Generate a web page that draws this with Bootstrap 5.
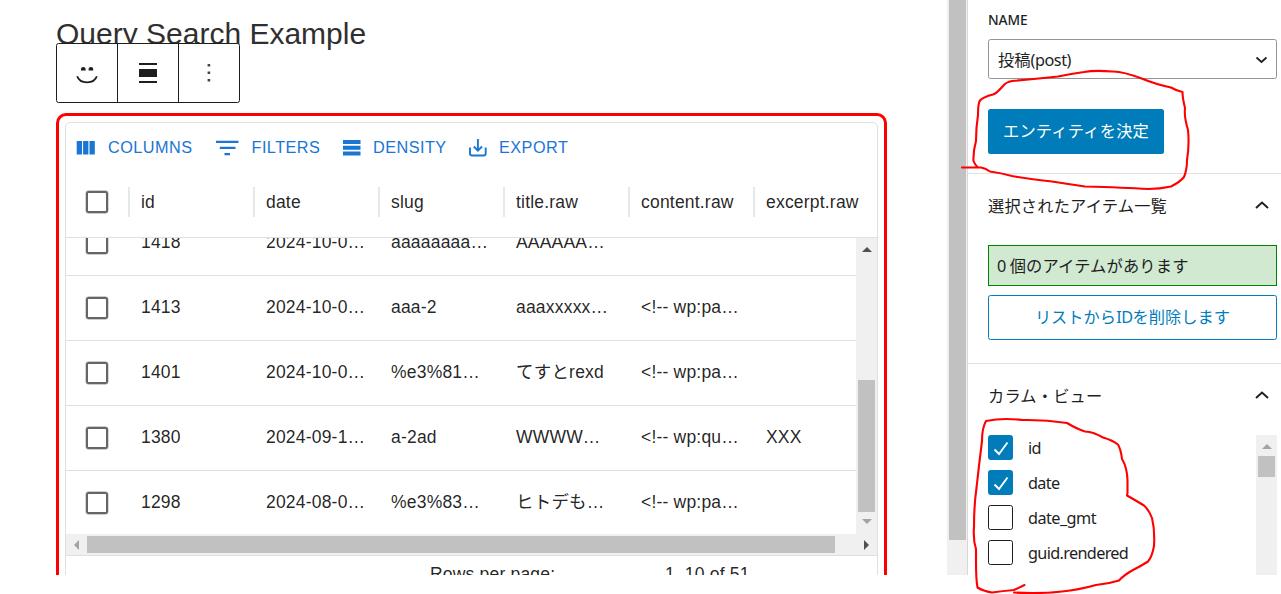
<!DOCTYPE html>
<html lang="ja">
<head>
<meta charset="utf-8">
<meta name="viewport" content="width=device-width, initial-scale=1">
<title>Query Search Example</title>
<link href="https://cdn.jsdelivr.net/npm/bootstrap@5.3.0/dist/css/bootstrap.min.css" rel="stylesheet">
<style>
  body { background: #fff; overflow: hidden; color: #1e1e1e; height: 594px; }
  .editor { height: 575px; }
  .canvas-pane { width: 947px; padding: 15px 0 0 56px; font-family: "Liberation Sans", "Noto Sans CJK JP", sans-serif; }
  .post-title { font-size: 30px; line-height: 38px; height: 28px; margin: 0; font-weight: 400; color: #2f2f2f; white-space: nowrap; }
  .block-toolbar { width: 184px; height: 60px; border: 1px solid #1e1e1e; border-radius: 2.5px; background: #fff; }
  .block-toolbar > span { border-right: 1px solid #1e1e1e; width: 61px; flex: none; }
  .block-toolbar > span:last-child { border-right: 0; width: 60px; }
  .query-block { width: 831px; height: 490px; margin-top: 10px; border: 3px solid red; border-radius: 10px; padding: 6px; }
  .data-grid { width: 813px; height: 480px; border: 1px solid #e0e0e0; border-radius: 5px; font-size: 17.5px; letter-spacing: .2px; color: rgba(0,0,0,.87); }
  .grid-tools { height: 49px; padding-left: 10px; color: #1976d2; font-size: 16.25px; letter-spacing: .46px; }
  .grid-tools svg { flex: none; }
  .tool-name { padding-left: 12px; flex: none; }
  .tool-columns { width: 119px; }
  .tool-filters { width: 104px; padding-left: 12.5px; }
  .tool-density { width: 108px; }
  .grid-head { height: 66px; border-bottom: 1px solid #e0e0e0; padding-bottom: 5px; }
  .pick-cell { width: 62px; padding-left: 20px; flex: none; }
  .pick-box { display: block; width: 22px; height: 22px; border: 2px solid #666; border-radius: 2.5px; box-shadow: 0 0 0 .4px #999; }
  .head-cell { width: 125px; height: 30px; line-height: 30px; border-left: 2px solid #e8e8e8; padding-left: 11px; flex: none; white-space: nowrap; }
  .head-cell:last-child { width: 122px; }
  .grid-rows { height: 296px; }
  .row-list { width: 790px; height: 296px; }
  .grid-row { height: 65px; border-bottom: 1px solid #e0e0e0; flex: none; }
  .grid-row:last-child { margin-bottom: -2px; }
  .data-cell { width: 125px; padding-left: 13px; flex: none; white-space: nowrap; line-height: 26px; padding-bottom: 2px; }
  .v-track { width: 21px; background: #f0f0f0; flex: none; }
  .h-track { height: 21px; background: #f0f0f0; padding-right: 8px; }
  .h-thumb { width: 748px; height: 17px; background: #c1c1c1; }
  .v-thumb { width: 17px; background: #c1c1c1; }
  .grid-foot { border-top: 1px solid #e0e0e0; height: 30px; padding-top: 5px; line-height: 26px; white-space: nowrap; letter-spacing: .187px; }
  .page-track { width: 21px; background: #f0f0f0; border-right: 1px solid #d8d8d8; padding-left: 2px; flex: none; }
  .side { width: 313px; flex: none; font-family: "Noto Sans", "Noto Sans CJK JP", sans-serif; font-size: 16.25px; line-height: 24px; letter-spacing: .17px; }
  .side-inner { width: 289px; margin-left: 20px; }
  .field-name { font-size: 13.75px; font-weight: 500; line-height: 20px; padding-top: 10px; height: 39px; letter-spacing: -.1px; }
  .type-select { height: 40px; border: 1px solid #949494; border-radius: 2.5px; padding: 0 8px 0 9px; }
  .type-select > span { padding-top: 1px; letter-spacing: 0; }
  .latin { letter-spacing: -.45px; }
  .wp-btn { border-radius: 2.5px; height: 45px; font-size: 16.25px; line-height: 24px; padding: 0 0 2px; letter-spacing: .2px; }
  .wp-btn.btn-decide { width: 176px; margin-top: 30px; background: #007cba; color: #fff; border: 0; }
  .wp-btn.btn-remove { color: #007cba; border: 1px solid #007cba; background: #fff; margin-top: 9px; letter-spacing: 0; }
  .side-panel { border-top: 1px solid #e0e0e0; }
  .panel-title { height: 64px; padding-right: 6px; }
  .panel-title svg { margin-bottom: 2px; }
  .count-note { height: 41px; border: 1px solid green; background: #d0e9d0; padding-left: 8px; margin-top: 7px; }
  .view-names { letter-spacing: -.67px; }
  .view-names .view-row > span:last-child { padding-top: 1px; }
  .view-box { width: 25px; height: 25px; border: 1px solid #1e1e1e; border-radius: 2.5px; flex: none; }
  .view-box.on { background: #007cba; border-color: #007cba; }
  .view-row { height: 35px; gap: 15px; }
  .pen-marks { left: 0; top: 0; pointer-events: none; }
</style>
</head>
<body>
<div class="editor d-flex overflow-hidden">
  <main class="canvas-pane flex-shrink-0 overflow-hidden">
    <h1 class="post-title">Query Search Example</h1>
    <div class="block-toolbar d-flex position-relative">
      <span class="d-flex align-items-center justify-content-center">
        <svg width="24" height="22" viewBox="0 0 24 22" style="margin-top:4px"><path d="M2.200 12.300c2.600 8.100 17 8.100 19.600 0" fill="none" stroke="#1e1e1e" stroke-width="1.8"/><path d="M6 6.500V5a2.300 2 0 0 1 4.600 0v1.500zM13.600 6.500V5a2.300 2 0 0 1 4.600 0v1.500z" fill="#1e1e1e"/></svg>
      </span>
      <span class="d-flex align-items-center justify-content-center">
        <svg width="18" height="20" viewBox="0 0 18 20"><path d="M0 0h18v2H0zM0 6h18v8H0zM0 18h18v2H0z" fill="#1e1e1e"/></svg>
      </span>
      <span class="d-flex align-items-center justify-content-center">
        <svg width="4" height="18" viewBox="0 0 4 18"><path d="M.600 0h2.600v2.600H.600zM.600 7.500h2.600v2.600H.600zM.600 15h2.600v2.600H.600z" fill="#444"/></svg>
      </span>
    </div>

    <section class="query-block">
      <div class="data-grid overflow-hidden">
        <div class="grid-tools d-flex align-items-center">
          <svg width="20" height="14" viewBox="0 0 20 14"><path d="M.700 0h5.300v13.500H.700zM7.100 0h5.300v13.500H7.100zM13.500 0h5.300v13.500h-5.300z" fill="#1976d2"/></svg>
          <span class="tool-name tool-columns">COLUMNS</span>
          <svg width="24" height="16" viewBox="0 0 24 16"><path d="M1 .800h22.500v2.300H1zM4.800 6.800h15.700v2.300H4.800zM9.500 13h5.500v2.300H9.500z" fill="#1976d2"/></svg>
          <span class="tool-name tool-filters">FILTERS</span>
          <svg width="18" height="16" viewBox="0 0 18 16"><path d="M0 0h17.500v4H0zM0 5.800h17.500v4H0zM0 11.500h17.500v4H0z" fill="#1976d2"/></svg>
          <span class="tool-name tool-density">DENSITY</span>
          <svg width="18" height="18" viewBox="0 0 18 18"><path d="M1 8.500V14.500a2 2 0 0 0 2 2H14.700a2 2 0 0 0 2-2V8.500M8.900 0V11.500M4.800 7.500l4.100 4.100L13 7.500" fill="none" stroke="#1976d2" stroke-width="1.900"/></svg>
          <span class="tool-name">EXPORT</span>
        </div>
        <div class="grid-head d-flex align-items-center">
          <div class="pick-cell"><i class="pick-box"></i></div>
          <div class="head-cell">id</div>
          <div class="head-cell">date</div>
          <div class="head-cell">slug</div>
          <div class="head-cell">title.raw</div>
          <div class="head-cell">content.raw</div>
          <div class="head-cell">excerpt.raw</div>
        </div>
        <div class="grid-rows d-flex">
          <div class="row-list d-flex flex-column justify-content-end overflow-hidden flex-shrink-0">
            <div class="grid-row d-flex align-items-center"><div class="pick-cell"><i class="pick-box"></i></div><div class="data-cell">1418</div><div class="data-cell">2024-10-0…</div><div class="data-cell">aaaaaaaa…</div><div class="data-cell">AAAAAA…</div></div>
            <div class="grid-row d-flex align-items-center"><div class="pick-cell"><i class="pick-box"></i></div><div class="data-cell">1413</div><div class="data-cell">2024-10-0…</div><div class="data-cell">aaa-2</div><div class="data-cell">aaaxxxxx…</div><div class="data-cell">&lt;!-- wp:pa…</div></div>
            <div class="grid-row d-flex align-items-center"><div class="pick-cell"><i class="pick-box"></i></div><div class="data-cell">1401</div><div class="data-cell">2024-10-0…</div><div class="data-cell">%e3%81…</div><div class="data-cell">てすとrexd</div><div class="data-cell">&lt;!-- wp:pa…</div></div>
            <div class="grid-row d-flex align-items-center"><div class="pick-cell"><i class="pick-box"></i></div><div class="data-cell">1380</div><div class="data-cell">2024-09-1…</div><div class="data-cell">a-2ad</div><div class="data-cell">WWWW…</div><div class="data-cell">&lt;!-- wp:qu…</div><div class="data-cell">XXX</div></div>
            <div class="grid-row d-flex align-items-center"><div class="pick-cell"><i class="pick-box"></i></div><div class="data-cell">1298</div><div class="data-cell">2024-08-0…</div><div class="data-cell">%e3%83…</div><div class="data-cell">ヒトデも…</div><div class="data-cell">&lt;!-- wp:pa…</div></div>
          </div>
          <div class="v-track d-flex flex-column align-items-center">
            <svg width="10" height="5" viewBox="0 0 10 5" style="margin-top:9px"><path d="M0 5 5 0l5 5z" fill="#505050"/></svg>
            <div class="v-thumb" style="height:132px;margin-top:128px"></div>
            <svg width="10" height="5" viewBox="0 0 10 5" style="margin-top:7px"><path d="M0 0l5 5 5-5z" fill="#a3a3a3"/></svg>
          </div>
        </div>
        <div class="h-track d-flex align-items-center">
          <svg width="5" height="10" viewBox="0 0 5 10" style="margin:0 8px"><path d="M5 0 0 5l5 5z" fill="#a3a3a3"/></svg>
          <div class="h-thumb"></div>
          <svg class="ms-auto" width="5" height="10" viewBox="0 0 5 10"><path d="M0 0l5 5-5 5z" fill="#505050"/></svg>
        </div>
        <div class="grid-foot d-flex">
          <span style="width:599px;padding-left:364px">Rows per page:</span><span>1–10 of 51</span>
        </div>
      </div>
    </section>
  </main>

  <div class="page-track"><div class="v-thumb" style="height:540px"></div></div>

  <aside class="side">
    <div class="side-inner" style="height:173px">
      <div class="field-name">NAME</div>
      <div class="type-select d-flex align-items-center justify-content-between">
        <span>投稿<span class="latin">(post)</span></span>
        <svg width="13" height="8" viewBox="0 0 13 8" style="margin-top:2px"><path d="M1.500 1.500 6.500 6l5-4.500" fill="none" stroke="#1e1e1e" stroke-width="1.700"/></svg>
      </div>
      <button type="button" class="btn wp-btn btn-decide d-block">エンティティを決定</button>
    </div>
    <div class="side-panel" style="height:190px">
      <div class="side-inner">
        <div class="panel-title d-flex align-items-center justify-content-between"><span>選択されたアイテム一覧</span>
          <svg width="17" height="10" viewBox="0 0 17 10"><path d="M2 8 8 2.500l6 5.500" fill="none" stroke="#1e1e1e" stroke-width="1.900"/></svg></div>
        <div class="count-note d-flex align-items-center"><span><span class="latin">0 </span>個のアイテムがあります</span></div>
        <button type="button" class="btn wp-btn btn-remove d-block w-100">リストから<span class="latin">ID</span>を削除します</button>
      </div>
    </div>
    <div class="side-panel">
      <div class="side-inner">
        <div class="panel-title d-flex align-items-center justify-content-between"><span>カラム・ビュー</span>
          <svg width="17" height="10" viewBox="0 0 17 10"><path d="M2 8 8 2.500l6 5.500" fill="none" stroke="#1e1e1e" stroke-width="1.900"/></svg></div>
        <div class="d-flex justify-content-between" style="padding-top:7px">
          <div class="view-names">
            <div class="view-row d-flex"><span class="view-box on"><svg class="d-block" width="23" height="23" viewBox="0 0 23 23"><path d="M5.500 13.500 10 18 18.500 6.500" fill="none" stroke="#fff" stroke-width="1.900"/></svg></span><span>id</span></div>
            <div class="view-row d-flex"><span class="view-box on"><svg class="d-block" width="23" height="23" viewBox="0 0 23 23"><path d="M5.500 13.500 10 18 18.500 6.500" fill="none" stroke="#fff" stroke-width="1.900"/></svg></span><span>date</span></div>
            <div class="view-row d-flex"><span class="view-box"></span><span style="letter-spacing:-.550px">date_gmt</span></div>
            <div class="view-row d-flex"><span class="view-box"></span><span>guid.rendered</span></div>
          </div>
          <div class="v-track d-flex flex-column align-items-center" style="height:140px">
            <svg width="10" height="5" viewBox="0 0 10 5" style="margin-top:9px"><path d="M0 5 5 0l5 5z" fill="#a3a3a3"/></svg>
            <div class="v-thumb" style="height:21px;margin-top:7px"></div>
          </div>
        </div>
      </div>
    </div>
  </aside>
</div>

<!-- hand-drawn pen marks over the sidebar -->
<svg class="pen-marks position-absolute" width="1281" height="594" viewBox="0 0 1281 594" fill="none" stroke="#f00" stroke-width="2.100" stroke-linecap="round" stroke-linejoin="round">
  <path d="M962 167.500H981Q985 168 990 171.500Q1001 173 1012 176Q1024 178.500 1052 181.500Q1068 184 1085 186.500Q1125 187.500 1148 189Q1160 189 1171 186.500Q1180 182 1184 177Q1187 170 1187 160Q1189.500 145 1188 130Q1184 117 1185 108Q1182.500 98 1182.500 92Q1177 91 1171 87.500Q1155 84 1143 79Q1122 71 1112 71.500Q1095 70 1084 72Q1070 74 1058 76.500Q1035 79 1012 81Q1006 82 1003 86Q997 93 993 94.500Q983 97 980 100.500Q978 103 978 115Q976 128 976 141Q973 152 973.500 161Q975 165 978 167.500"/>
  <path d="M1024.500 585 1014 590Q1003 591 992 592.500Q983 591 977.500 587.500Q976 580 976 561V549Q973 540 974 527Q974 505 976.500 488Q979 465 982 441Q982 428 986 421Q1003 417.500 1022 420Q1045 419.500 1067 423Q1077 429 1085 431.500Q1094 432 1103 437.500Q1112 440 1118 444.500Q1121 450 1122 459Q1127 467 1127.500 480V493Q1127 495 1127 495.500Q1135 500 1144 505.500Q1149 510 1152 518Q1155 530 1154 546Q1152 557 1148 561.500Q1141 566 1133 570Q1124 575 1119 580.500Q1108 584 1096 585Q1078 590 1062 591.500Q1040 594 1014 592.500"/>
</svg>
<script src="https://cdn.jsdelivr.net/npm/bootstrap@5.3.0/dist/js/bootstrap.bundle.min.js"></script>
</body>
</html>
